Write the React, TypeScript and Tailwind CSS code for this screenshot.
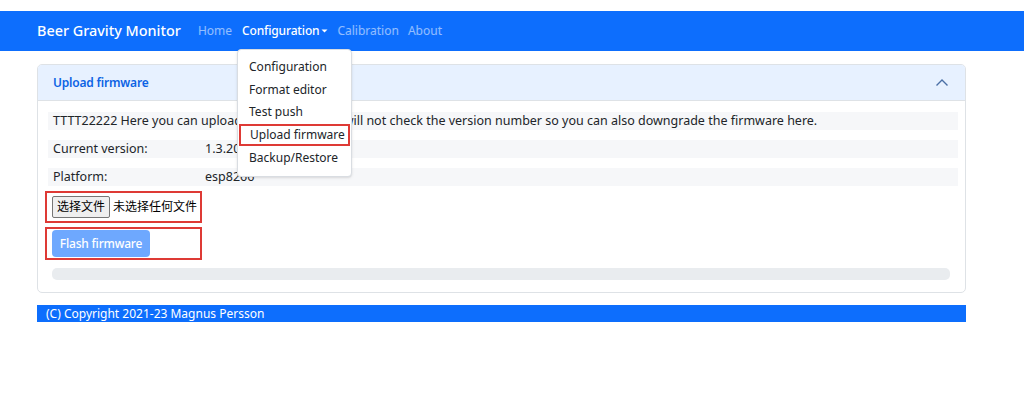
import React from 'react'

const font = { fontFamily: '"Noto Sans", "Noto Sans CJK SC", sans-serif' }

function Navbar() {
    return (
        <div className="flex items-center h-[40px] bg-[#0d6efd] pl-[37px]">
            <span className="text-[14.4px] font-medium text-white mr-[17px]">Beer Gravity Monitor</span>
            <div className="flex items-center gap-[9px] text-[12px]">
                <span className="text-white/55">Home</span>
                <div className="relative ml-[1px]">
                    <span className="flex items-center text-white font-medium tracking-[-0.15px]">
                        Configuration
                        <svg width="7" height="6" viewBox="0 0 7 6" className="ml-[2px]">
                            <path d="M0.5 1.5 L3.5 4.5 L6.5 1.5 Z" fill="white" />
                        </svg>
                    </span>
                    <div className="absolute left-[-5px] top-[27px] w-[115px] z-10 rounded-[4px] border border-[#d9dde2] bg-white py-[6px] shadow-sm whitespace-nowrap text-[12px] tracking-normal">
                        <div className="px-[11px] h-[22.5px] flex items-center text-[#212529]">Configuration</div>
                        <div className="px-[11px] h-[22.5px] flex items-center text-[#212529]">Format editor</div>
                        <div className="px-[11px] h-[22.5px] flex items-center text-[#212529]">Test push</div>
                        <div className="mx-[1px] h-[22px] flex items-center px-[9px] border-2 border-[#de3a35] text-[#212529]">Upload firmware</div>
                        <div className="px-[11px] h-[24px] flex items-center text-[#212529]">Backup/Restore</div>
                    </div>
                </div>
                <span className="text-white/55">Calibration</span>
                <span className="text-white/55">About</span>
            </div>
        </div>
    )
}

function Row({ label, value, children }: { label?: string; value?: string; children?: React.ReactNode }) {
    return (
        <div className="flex items-center h-[18px] bg-[#f6f7f9] pl-[5px] text-[12.5px] text-[#212529] whitespace-nowrap">
            {children ?? (
                <>
                    <span className="w-[152px]">{label}</span>
                    <span>{value}</span>
                </>
            )}
        </div>
    )
}

export default function App() {
    return (
        <div className="w-[1024px] h-[418px] bg-white pt-[11px]" style={font}>
            <Navbar />
            <div className="ml-[37px] w-[929px] mt-[13px] rounded-[5px] border border-[#dee2e6] overflow-hidden">
                <div className="flex items-center justify-between h-[36px] bg-[#e7f1ff] border-b border-[#dee2e6] pl-[15px] pr-[16px]">
                    <span className="text-[12px] font-semibold tracking-[-0.2px] text-[#0c63e4]">Upload firmware</span>
                    <svg width="14" height="10" viewBox="0 0 14 10">
                        <path d="M1.5 7.5 L7 2 L12.5 7.5" fill="none" stroke="#4a6fa5" strokeWidth="1.4" />
                    </svg>
                </div>
                <div className="pl-[10px] pr-[7px] pt-[11px] pb-[12px]">
                    <div className="flex flex-col gap-[10px]">
                        <Row>TTTT22222 Here you can upload a new version, it will not check the version number so you can also downgrade the firmware here.</Row>
                        <Row label="Current version:" value="1.3.20" />
                        <Row label="Platform:" value="esp8266" />
                    </div>
                    <div className="-ml-[3px] mt-[5px] w-[157px] h-[32px] border-2 border-[#de3a35] flex items-center pl-[5px]">
                        <span className="h-[22px] px-[4px] flex items-center text-[12px] text-black bg-[#efefef] border border-[#767676] rounded-[2px]">选择文件</span>
                        <span className="ml-[3px] text-[12px] text-black">未选择任何文件</span>
                    </div>
                    <div className="-ml-[3px] mt-[4px] w-[157px] h-[33px] border-2 border-[#de3a35] flex items-center pl-[5px]">
                        <span className="h-[27px] w-[98px] justify-center flex items-center rounded-[4px] bg-[#6ea8fe] text-white text-[12px] font-medium tracking-[-0.2px]">Flash firmware</span>
                    </div>
                    <div className="mt-[8px] ml-[4px] mr-[8px] h-[12px] rounded-[5px] bg-[#e9ecef]" />
                </div>
            </div>
            <div className="ml-[37px] w-[929px] mt-[12px] h-[17px] bg-[#0d6efd] flex items-center pl-[9px] text-[12px] text-white">
                (C) Copyright 2021-23 Magnus Persson
            </div>
        </div>
    )
}
